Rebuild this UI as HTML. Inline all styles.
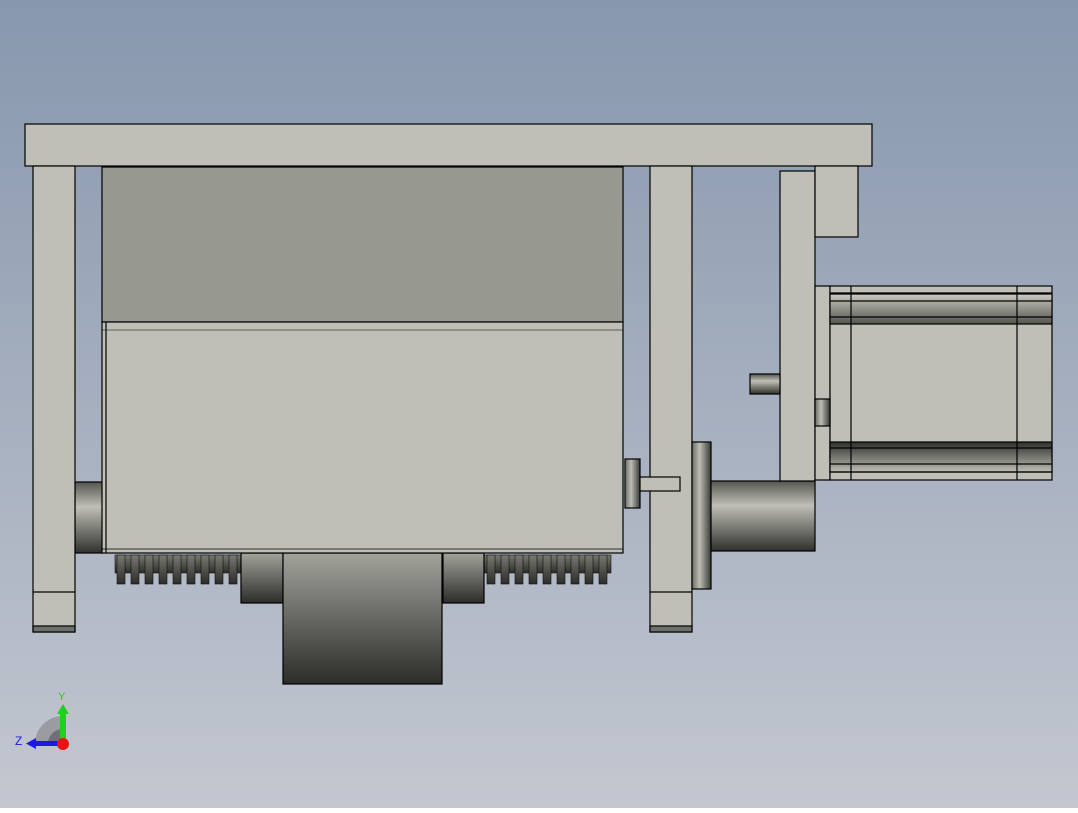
<!DOCTYPE html>
<html><head><style>html,body{margin:0;padding:0;}body{width:1078px;height:808px;overflow:hidden;}</style></head><body>
<svg width="1078" height="808" xmlns="http://www.w3.org/2000/svg">
<defs>
<linearGradient id="bg" x1="0" y1="0" x2="0" y2="1"><stop offset="0" stop-color="#8797ad"/><stop offset="1" stop-color="#c3c7d0"/></linearGradient>
<linearGradient id="cyl" x1="0" y1="0" x2="0" y2="1"><stop offset="0" stop-color="#55564f"/><stop offset="0.35" stop-color="#bfbfb7"/><stop offset="1" stop-color="#30312c"/></linearGradient>
<linearGradient id="dk" x1="0" y1="0" x2="0" y2="1"><stop offset="0" stop-color="#a2a39b"/><stop offset="1" stop-color="#2c2d29"/></linearGradient>
<linearGradient id="tg" x1="0" y1="0" x2="0" y2="1"><stop offset="0" stop-color="#77786f"/><stop offset="1" stop-color="#2c2d29"/></linearGradient>
<linearGradient id="cylx" x1="0" y1="0" x2="1" y2="0"><stop offset="0" stop-color="#6a6b64"/><stop offset="0.4" stop-color="#bdbdb5"/><stop offset="1" stop-color="#3a3b36"/></linearGradient>
<linearGradient id="rib" x1="0" y1="0" x2="0" y2="1"><stop offset="0" stop-color="#c9c9c1"/><stop offset="1" stop-color="#55564f"/></linearGradient>
<linearGradient id="rib2" x1="0" y1="0" x2="0" y2="1"><stop offset="0" stop-color="#2e2f2a"/><stop offset="1" stop-color="#bdbdb5"/></linearGradient>
</defs>
<rect width="1078" height="808" fill="url(#bg)"/>
<g fill="url(#tg)" stroke="#111" stroke-width="0.6">
<rect x="115" y="555" width="126" height="18"/>
<rect x="484" y="555" width="127" height="18"/>
<rect x="117" y="555" width="8" height="29"/><rect x="131" y="555" width="8" height="29"/><rect x="145" y="555" width="8" height="29"/><rect x="159" y="555" width="8" height="29"/><rect x="173" y="555" width="8" height="29"/><rect x="187" y="555" width="8" height="29"/><rect x="201" y="555" width="8" height="29"/><rect x="215" y="555" width="8" height="29"/><rect x="229" y="555" width="8" height="29"/>
<rect x="487" y="555" width="8" height="29"/><rect x="501" y="555" width="8" height="29"/><rect x="515" y="555" width="8" height="29"/><rect x="529" y="555" width="8" height="29"/><rect x="543" y="555" width="8" height="29"/><rect x="557" y="555" width="8" height="29"/><rect x="571" y="555" width="8" height="29"/><rect x="585" y="555" width="8" height="29"/><rect x="599" y="555" width="8" height="29"/>
</g>
<g stroke="#000" stroke-width="1.2" fill="#bfbfb7">
<rect x="75" y="482" width="28" height="71" fill="url(#cyl)"/>
<rect x="25" y="124" width="847" height="42"/>
<rect x="33" y="166" width="42" height="466"/>
<line x1="33" y1="592" x2="75" y2="592"/>
<rect x="33" y="626" width="42" height="6" fill="#6f706a"/>
<rect x="241" y="553" width="42" height="50" fill="url(#dk)"/>
<rect x="443" y="553" width="41" height="50" fill="url(#dk)"/>
<rect x="283" y="553" width="159" height="131" fill="url(#dk)"/>
<rect x="102" y="167" width="521" height="155" fill="#979890"/>
<rect x="102" y="322" width="521" height="231"/>
<line x1="106" y1="322" x2="106" y2="553"/>
<line x1="102" y1="330" x2="623" y2="330" stroke-width="0.6"/>
<line x1="102" y1="549" x2="623" y2="549" stroke-width="0.8"/>
<rect x="650" y="166" width="42" height="466"/>
<line x1="650" y1="592" x2="692" y2="592"/>
<rect x="650" y="626" width="42" height="6" fill="#6f706a"/>
<rect x="625" y="459" width="15" height="49" fill="url(#cylx)"/>
<rect x="640" y="477" width="40" height="14" fill="#bfbfb7"/>
<rect x="692" y="442" width="19" height="147" fill="url(#cylx)"/>
<rect x="711" y="481" width="104" height="70" fill="url(#cyl)"/>
<rect x="780" y="171" width="35" height="310"/>
<rect x="815" y="166" width="43" height="71"/>
<rect x="750" y="374" width="30" height="20" fill="url(#cyl)"/>
<rect x="815" y="286" width="15" height="194"/>
<rect x="830" y="286" width="222" height="194"/>
<rect x="830" y="294" width="222" height="30" fill="url(#rib)"/>
<line x1="830" y1="293" x2="1052" y2="293"/>
<line x1="830" y1="301" x2="1052" y2="301"/>
<line x1="830" y1="317" x2="1052" y2="317"/>
<rect x="830" y="442" width="222" height="30" fill="url(#rib2)"/>
<line x1="830" y1="448" x2="1052" y2="448"/>
<line x1="830" y1="464" x2="1052" y2="464"/>
<line x1="830" y1="472" x2="1052" y2="472"/>
<line x1="851" y1="286" x2="851" y2="480"/>
<line x1="1017" y1="286" x2="1017" y2="480"/>
<rect x="815" y="399" width="15" height="27" fill="url(#cylx)"/>
</g>
<path d="M35 742 A28 28 0 0 1 63 716 L63 742 Z" fill="#9a9ca1"/>
<path d="M48 742 A15 15 0 0 1 63 729 L63 742 Z" fill="#6f7176"/>
<rect x="60" y="712" width="6" height="30" fill="#1fd01f"/>
<polygon points="57,714 63,704 69,714" fill="#1fd01f"/>
<rect x="34" y="741" width="28" height="5" fill="#1a1ae0"/>
<polygon points="36,738 26,743.5 36,749" fill="#1a1ae0"/>
<circle cx="63" cy="744" r="6" fill="#ee1111"/>
<text x="58" y="700" font-family="Liberation Sans, sans-serif" font-size="11" fill="#1fd01f">Y</text>
<text x="15" y="745" font-family="Liberation Sans, sans-serif" font-size="12" fill="#1a1ae0">Z</text>
</svg>
</body></html>
